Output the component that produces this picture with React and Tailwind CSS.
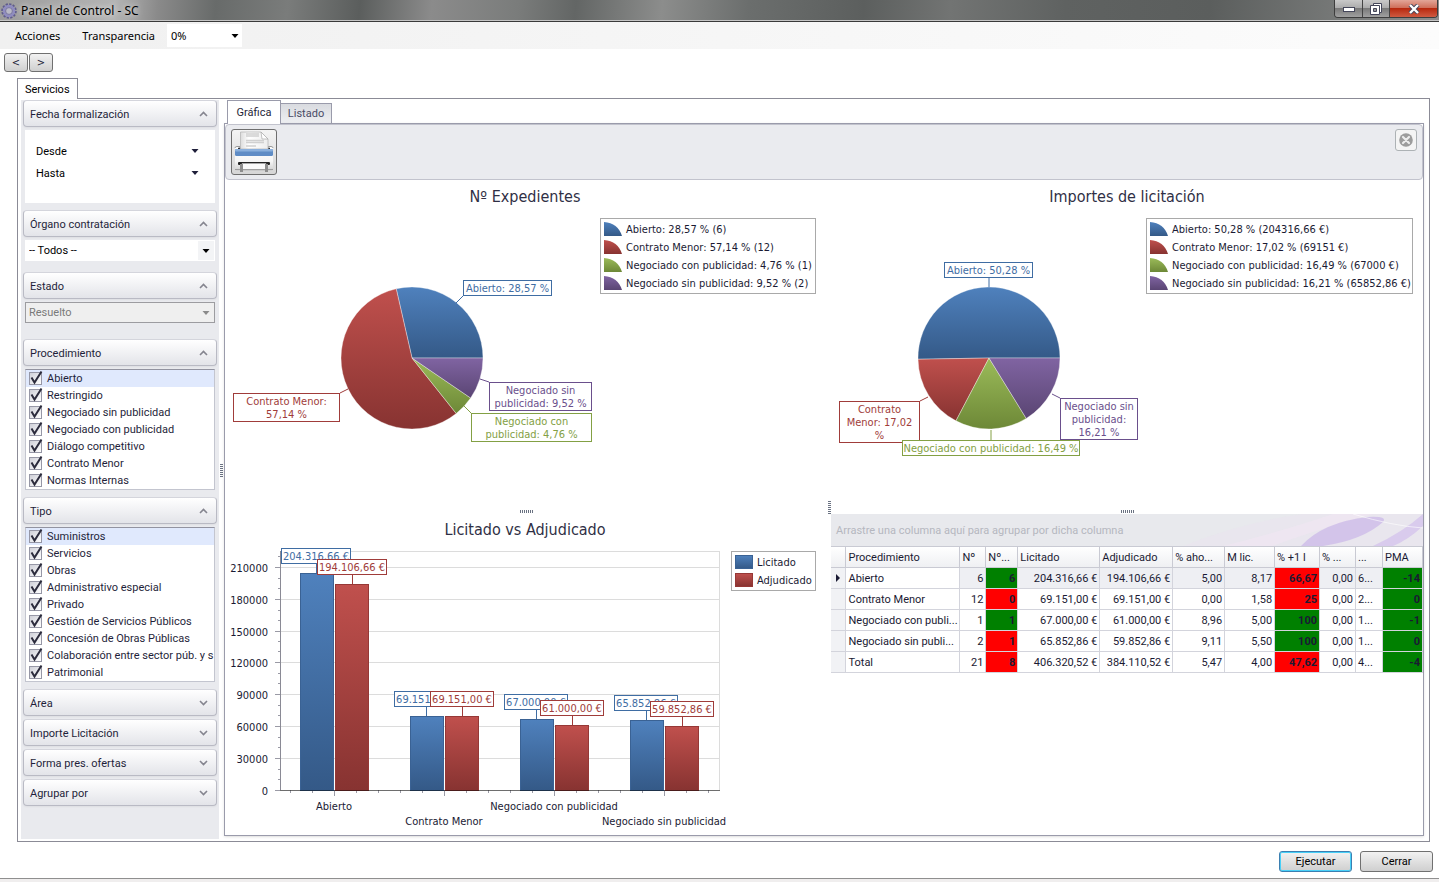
import React, { useState } from "react";

const COLORS = {
  blue: { line: "#3f6da3", fill: "url(#blueFill)" },
  red: { line: "#a03c3a", fill: "url(#redFill)" },
  green: { line: "#83a044", fill: "url(#greenFill)" },
  purple: { line: "#6a4f8c", fill: "url(#purpleFill)" },
};

const procedimientos = [
  "Abierto",
  "Restringido",
  "Negociado sin publicidad",
  "Negociado con publicidad",
  "Diálogo competitivo",
  "Contrato Menor",
  "Normas Internas",
];

const tipos = [
  "Suministros",
  "Servicios",
  "Obras",
  "Administrativo especial",
  "Privado",
  "Gestión de Servicios Públicos",
  "Concesión de Obras Públicas",
  "Colaboración entre sector púb. y s",
  "Patrimonial",
];

const expedientes = {
  title: "Nº Expedientes",
  titleX: 300,
  width: 602,
  cx: 187,
  slices: [
    { color: "blue", value: 28.57 },
    { color: "red", value: 57.14 },
    { color: "green", value: 4.76 },
    { color: "purple", value: 9.52 },
  ],
  labels: [
    { color: "blue", x: 238, y: 100, w: 89, lines: ["Abierto: 28,57 %"], link: [231, 123, 238, 116] },
    { color: "red", x: 8, y: 213, w: 107, lines: ["Contrato Menor:", "57,14 %"], link: [123, 209, 115, 213] },
    { color: "purple", x: 264, y: 202, w: 103, lines: ["Negociado sin", "publicidad: 9,52 %"], link: [255, 199, 264, 202] },
    { color: "green", x: 246, y: 233, w: 121, lines: ["Negociado con", "publicidad: 4,76 %"], link: [239, 226, 246, 233] },
  ],
  legendX: 375,
  legendWidth: 216,
  legend: [
    "Abierto: 28,57 % (6)",
    "Contrato Menor: 57,14 % (12)",
    "Negociado con publicidad: 4,76 % (1)",
    "Negociado sin publicidad: 9,52 % (2)",
  ],
};

const importes = {
  title: "Importes de licitación",
  titleX: 296,
  width: 592,
  cx: 158,
  slices: [
    { color: "blue", value: 50.28 },
    { color: "red", value: 17.02 },
    { color: "green", value: 16.49 },
    { color: "purple", value: 16.21 },
  ],
  labels: [
    { color: "blue", x: 113, y: 82, w: 89, lines: ["Abierto: 50,28 %"], link: [158, 98, 158, 107] },
    { color: "red", x: 8, y: 221, w: 81, lines: ["Contrato", "Menor: 17,02", "%"], link: [97, 217, 89, 221] },
    { color: "purple", x: 229, y: 218, w: 78, lines: ["Negociado sin", "publicidad:", "16,21 %"], link: [221, 214, 229, 218] },
    { color: "green", x: 71, y: 260, w: 178, lines: ["Negociado con publicidad: 16,49 %"], link: [160, 250, 160, 260] },
  ],
  legendX: 315,
  legendWidth: 267,
  legend: [
    "Abierto: 50,28 % (204316,66 €)",
    "Contrato Menor: 17,02 % (69151 €)",
    "Negociado con publicidad: 16,49 % (67000 €)",
    "Negociado sin publicidad: 16,21 % (65852,86 €)",
  ],
};

const bars = [
  { name: "Abierto", lic: 204316.66, adj: 194106.66, licText: "204.316,66 €", adjText: "194.106,66 €" },
  { name: "Contrato Menor", lic: 69151, adj: 69151, licText: "69.151,00 €", adjText: "69.151,00 €" },
  { name: "Negociado con publicidad", lic: 67000, adj: 61000, licText: "67.000,00 €", adjText: "61.000,00 €" },
  { name: "Negociado sin publicidad", lic: 65852.86, adj: 59852.86, licText: "65.852,86 €", adjText: "59.852,86 €" },
];

const columns = [
  { title: "", width: 15 },
  { title: "Procedimiento", width: 114 },
  { title: "Nº", width: 26 },
  { title: "Nº...", width: 32 },
  { title: "Licitado", width: 82 },
  { title: "Adjudicado", width: 73 },
  { title: "% aho...", width: 52 },
  { title: "M lic.", width: 50 },
  { title: "% +1 l", width: 45 },
  { title: "% ...", width: 36 },
  { title: "...", width: 27 },
  { title: "PMA", width: 40 },
];

const rows = [
  ["Abierto", "6", "6", "204.316,66 €", "194.106,66 €", "5,00", "8,17", "66,67", "0,00", "6...", "-14"],
  ["Contrato Menor", "12", "0", "69.151,00 €", "69.151,00 €", "0,00", "1,58", "25", "0,00", "2...", "0"],
  ["Negociado con publi...", "1", "1", "67.000,00 €", "61.000,00 €", "8,96", "5,00", "100", "0,00", "1...", "-1"],
  ["Negociado sin publi...", "2", "1", "65.852,86 €", "59.852,86 €", "9,11", "5,50", "100", "0,00", "1...", "0"],
  ["Total", "21", "8", "406.320,52 €", "384.110,52 €", "5,47", "4,00", "47,62", "0,00", "4...", "-4"],
];

// which of the highlighted cells are green, by row
const greenCells = [[2, 10], [10], [2, 7, 10], [7, 10], [10]];

const GradientDefs = () => (
  <svg width="0" height="0" className="absolute" aria-hidden="true">
    <defs>
      <linearGradient id="blueFill" x1="0" y1="0" x2="0" y2="1">
        <stop offset="0" stopColor="#4f81bd" />
        <stop offset="1" stopColor="#345987" />
      </linearGradient>
      <linearGradient id="redFill" x1="0" y1="0" x2="0" y2="1">
        <stop offset="0" stopColor="#c0504d" />
        <stop offset="1" stopColor="#873331" />
      </linearGradient>
      <linearGradient id="greenFill" x1="0" y1="0" x2="0" y2="1">
        <stop offset="0" stopColor="#9bbb59" />
        <stop offset="1" stopColor="#6d8837" />
      </linearGradient>
      <linearGradient id="purpleFill" x1="0" y1="0" x2="0" y2="1">
        <stop offset="0" stopColor="#8064a2" />
        <stop offset="1" stopColor="#5a4573" />
      </linearGradient>
    </defs>
  </svg>
);

const ChartLabel = ({ color, x, y, w, lines }) => (
  <g>
    <rect
      x={x + 0.5}
      y={y + 0.5}
      width={w - 1}
      height={lines.length * 13 + 2}
      fill="#fff"
      stroke={COLORS[color].line}
    />
    {lines.map((line, i) => (
      <text key={line} x={x + w / 2} y={y + 12 + i * 13} textAnchor="middle" fill={COLORS[color].line}>
        {line}
      </text>
    ))}
  </g>
);

const PieChart = ({ chart }) => {
  const { cx } = chart;
  const cy = 178;
  const r = 71;
  let angle = 0;

  const slices = chart.slices.map((slice) => {
    const start = angle;
    angle += (slice.value / 100) * Math.PI * 2;
    const large = angle - start > Math.PI ? 1 : 0;
    const d = `M${cx} ${cy} L${cx + r * Math.cos(start)} ${cy - r * Math.sin(start)} A${r} ${r} 0 ${large} 0 ${
      cx + r * Math.cos(angle)
    } ${cy - r * Math.sin(angle)} Z`;
    return { ...slice, d };
  });

  return (
    <svg viewBox={`0 0 ${chart.width} 328`} className="block w-full" role="img" aria-label={chart.title}>
      <text x={chart.titleX} y="22" textAnchor="middle" fill="#2f2f45" className="text-[16px]">
        {chart.title}
      </text>
      {slices.map((s) => (
        <path key={s.color} d={s.d} fill={COLORS[s.color].fill} stroke="#fff" strokeOpacity="0.35" />
      ))}
      {chart.labels.map(({ link, color }) => (
        <line key={color} x1={link[0]} y1={link[1]} x2={link[2]} y2={link[3]} stroke={COLORS[color].line} />
      ))}
      {chart.labels.map((label) => (
        <ChartLabel key={label.color} {...label} />
      ))}

      <rect x={chart.legendX + 0.5} y="38.5" width={chart.legendWidth - 1} height="75" fill="#fff" stroke="#a9a9a9" />
      {chart.legend.map((text, i) => (
        <g key={text}>
          <path
            d={`M${chart.legendX + 4} ${42 + i * 18} q14 1 18 14 h-18 z`}
            fill={COLORS[chart.slices[i].color].fill}
          />
          <text x={chart.legendX + 26} y={53 + i * 18} fill="#1a1a33">
            {text}
          </text>
        </g>
      ))}
    </svg>
  );
};

const BarChart = () => {
  const left = 55;
  const right = 495;
  const base = 276;
  const unit = 31.9 / 30000;
  const ticks = [0, 30000, 60000, 90000, 120000, 150000, 180000, 210000];

  return (
    <svg viewBox="0 0 602 320" className="block w-full" role="img" aria-label="Licitado vs Adjudicado">
      <text x="300" y="21" textAnchor="middle" fill="#2f2f45" className="text-[16px]">
        Licitado vs Adjudicado
      </text>
      <rect x={left + 0.5} y="37.5" width={right - left - 1} height={base - 37} fill="none" stroke="#dcdcdc" />
      {ticks.map((t) => {
        const y = Math.round(base - t * unit) + 0.5;
        return (
          <g key={t}>
            <line x1={left} x2={right} y1={y} y2={y} stroke="#dcdcdc" />
            <line x1={left - 5} x2={left} y1={y} y2={y} stroke="#9a9aa5" />
            {t < 210000 && (
              <>
                <line x1={left - 2} x2={left} y1={y - 11} y2={y - 11} stroke="#9a9aa5" />
                <line x1={left - 2} x2={left} y1={y - 21} y2={y - 21} stroke="#9a9aa5" />
              </>
            )}
            <text x={left - 12} y={y + 4} textAnchor="end" fill="#1a1a33">
              {t}
            </text>
          </g>
        );
      })}
      <line x1={left - 2} x2={left} y1="42.5" y2="42.5" stroke="#9a9aa5" />
      <line x1={left + 0.5} x2={left + 0.5} y1="37" y2={base} stroke="#8a8a95" />
      {Array.from({ length: 20 }, (_, i) => (
        <line
          key={i}
          x1={left + 10.5 + i * 22}
          x2={left + 10.5 + i * 22}
          y1={base}
          y2={base + (i % 5 === 2 ? 6 : 3)}
          stroke="#9a9aa5"
        />
      ))}

      {bars.map((b, i) => {
        const x = 75 + i * 110;
        const hl = Math.round(b.lic * unit);
        const ha = Math.round(b.adj * unit);
        return (
          <g key={b.name}>
            <rect x={x + 0.5} y={base - hl + 0.5} width="33" height={hl} fill={COLORS.blue.fill} stroke="#3a6294" />
            <rect x={x + 35.5} y={base - ha + 0.5} width="33" height={ha} fill={COLORS.red.fill} stroke="#963836" />
            <text x={x + 34} y={i % 2 ? 311 : 296} textAnchor="middle" fill="#1a1a33">
              {b.name}
            </text>
          </g>
        );
      })}
      <line x1={left} x2={right} y1={base + 0.5} y2={base + 0.5} stroke="#000" strokeOpacity="0.5" />

      {bars.map((b, i) => {
        const x = 75 + i * 110;
        const yl = base - Math.round(b.lic * unit);
        const ya = base - Math.round(b.adj * unit);
        const w = i === 0 ? 70 : 64;
        return (
          <g key={b.name}>
            <line x1={x + 16.5} x2={x + 16.5} y1={yl - 10} y2={yl} stroke={COLORS.blue.line} />
            <ChartLabel color="blue" x={x + 16 - w / 2} y={yl - 25} w={w} lines={[b.licText]} />
            <line x1={x + 52.5} x2={x + 52.5} y1={ya - 10} y2={ya} stroke={COLORS.red.line} />
            <ChartLabel color="red" x={x + 52 - w / 2} y={ya - 25} w={w} lines={[b.adjText]} />
          </g>
        );
      })}

      <rect x="506.5" y="37.5" width="84" height="39" fill="#fff" stroke="#a9a9a9" />
      <rect x="510.5" y="41.5" width="17" height="13" fill={COLORS.blue.fill} stroke="#3a6294" />
      <rect x="510.5" y="59.5" width="17" height="13" fill={COLORS.red.fill} stroke="#963836" />
      <text x="532" y="52" fill="#1a1a33">Licitado</text>
      <text x="532" y="70" fill="#1a1a33">Adjudicado</text>
    </svg>
  );
};

const GearIcon = () => (
  <svg viewBox="0 0 16 16" className="size-4">
    <circle cx="8" cy="8" r="6.6" fill="none" stroke="#5f5b8c" strokeWidth="2.4" strokeDasharray="2.2 1.25" />
    <circle cx="8" cy="8" r="4.900" fill="none" stroke="#8f8cc0" strokeWidth="2.600" />
    <circle cx="8" cy="8" r="3.400" fill="#b9b9c6" stroke="#6d699c" strokeWidth="0.8" />
  </svg>
);

const PrinterIcon = () => (
  <svg viewBox="0 0 44 44" className="size-11">
    <defs>
      <linearGradient id="paper" x1="0" y1="0" x2="1" y2="0">
        <stop offset="0" stopColor="#dcdcdc" />
        <stop offset="0.3" stopColor="#fff" />
        <stop offset="1" stopColor="#ededed" />
      </linearGradient>
      <linearGradient id="body" x1="0" y1="0" x2="0" y2="1">
        <stop offset="0" stopColor="#fdfdfd" />
        <stop offset="0.6" stopColor="#f6f6f6" />
        <stop offset="1" stopColor="#cfcfcf" />
      </linearGradient>
    </defs>
    <path d="M3 19 Q3 16 5 16 H38 Q41 16 41 19 V39 Q41 41 38 41 H5 Q3 41 3 39 Z" fill="url(#body)" />
    <path d="M3 18 Q3 16.500 5 16.500 H8 V19 M36 19 V16.500 H39 Q41 16.500 41 18" fill="none" stroke="#9a9a9a" />
    <path d="M6 18.500 H38" stroke="#333" strokeWidth="1.500" />
    <path d="M8.500 2 H29 L36 9 V19 H8.500 Z" fill="url(#paper)" stroke="#b8b8b8" strokeWidth="0.8" />
    <path d="M29 2 L36 9 H30 Z" fill="#fff" stroke="#aaa" strokeWidth="0.7" />
    <path d="M14 4 H27 M14 6 H27 M14 10.500 H32 M14 12.500 H32 M14 16 H24" stroke="#d0d0d0" strokeWidth="1.500" />
    <rect x="3" y="19" width="38" height="7" rx="1.500" fill="#5f8cc5" />
    <rect x="3" y="19" width="38" height="2.500" rx="1" fill="#8aafdc" />
    <rect x="6" y="32" width="32" height="3" rx="1" fill="#222" />
    <path d="M10 33.500 H34 V40 H10 Z" fill="#fafafa" stroke="#bbb" strokeWidth="0.6" />
    <path d="M3 39.500 H41" stroke="#9f9f9f" />
    <rect x="8" y="34" width="3" height="8" fill="#8d8d8d" />
    <rect x="33" y="34" width="3" height="8" fill="#8d8d8d" />
  </svg>
);

const Arrow = ({ className }) => (
  <svg viewBox="0 0 8 4" className={`pointer-events-none h-1 w-2 ${className}`}>
    <path d="M0.500 0 H7.500 L4 4 Z" fill="currentColor" />
  </svg>
);

const Grip = ({ vertical = false }) => (
  <div className={`flex gap-px ${vertical ? "flex-col" : ""}`}>
    {Array.from({ length: 7 }, (_, i) => (
      <span key={i} className={vertical ? "h-px w-[3px] bg-gray-500" : "h-[3px] w-px bg-gray-500"}></span>
    ))}
  </div>
);

const GroupHeader = ({ title, open = false, onClick }) => (
  <button
    onClick={onClick}
    aria-expanded={open}
    className="flex h-[27px] w-full items-center justify-between rounded-sm border border-[#b9bac4] border-t-[#d4d5dc] bg-linear-to-b from-white to-[#e3e4e9] pt-px pr-2 pl-1.5 shadow-xs"
  >
    <span>{title}</span>
    <svg viewBox="0 0 9 6" className="h-1.5 w-[9px]">
      <path
        d={open ? "M1 5 L4.500 1.500 L8 5" : "M1 1 L4.500 4.500 L8 1"}
        fill="none"
        stroke="#85858f"
        strokeWidth="1.600"
      />
    </svg>
  </button>
);

const CheckList = ({ items }) => (
  <div className="mx-0.5 mt-[3px] overflow-hidden border border-[#c3c5cf] border-t-[#9293a0] bg-white">
    {items.map((item, i) => (
      <label
        key={item}
        className={`flex h-[17px] items-center gap-1 pl-[3px] whitespace-nowrap ${i === 0 ? "bg-[#e0e9fd]" : ""}`}
      >
        <span className="relative size-3.5 shrink-0">
          <input
            type="checkbox"
            defaultChecked
            className="peer block size-[13px] appearance-none border border-[#9697a6] bg-linear-to-br from-[#cfd0d8] to-white"
          />
          <svg
            viewBox="0 0 14 14"
            className="pointer-events-none absolute inset-0 hidden size-3.5 overflow-visible peer-checked:block"
          >
            <path d="M2.500 5.500 L5.500 10.500 L12.500 -0.500" fill="none" stroke="#2b2b3c" strokeWidth="2" />
          </svg>
        </span>
        {item}
      </label>
    ))}
  </div>
);

const DateField = ({ label }) => (
  <label className="relative flex h-[22px] items-center">
    <span className="w-16 pl-[11px] text-black">{label}</span>
    <select className="flex-1 appearance-none bg-white" defaultValue="">
      <option value=""></option>
    </select>
    <Arrow className="absolute right-4 text-[#1f1f3a]" />
  </label>
);

const Sidebar = () => {
  const [open, setOpen] = useState({ fecha: true, organo: true, estado: true, procedimiento: true, tipo: true });
  const toggle = (key) => setOpen({ ...open, [key]: !open[key] });

  return (
    <aside className="flex w-[198px] shrink-0 flex-col bg-[#e9eaee] px-0.5 font-[Roboto,sans-serif]">
      <div className="mb-[7px]">
        <GroupHeader title="Fecha formalización" open={open.fecha} onClick={() => toggle("fecha")} />
        {open.fecha && (
          <div className="mx-0.5 mt-[3px] h-[73px] bg-white pt-2.5">
            <DateField label="Desde" />
            <DateField label="Hasta" />
          </div>
        )}
      </div>

      <div className="mb-[11px]">
        <GroupHeader title="Órgano contratación" open={open.organo} onClick={() => toggle("organo")} />
        {open.organo && (
          <div className="relative mx-0.5 mt-[3px] flex h-[21px] items-center bg-white">
            <select aria-label="Órgano contratación" className="h-full w-full appearance-none pl-1 text-black">
              <option>-- Todos --</option>
            </select>
            <span className="pointer-events-none absolute inset-y-px right-px flex w-4 items-center justify-center bg-gray-100">
              <Arrow className="text-black" />
            </span>
          </div>
        )}
      </div>

      <div className="mb-4">
        <GroupHeader title="Estado" open={open.estado} onClick={() => toggle("estado")} />
        {open.estado && (
          <div className="relative mx-0.5 mt-[3px] flex h-[21px] items-center border border-[#9c9ca0] bg-[#efefef]">
            <select
              aria-label="Estado"
              disabled
              className="h-full w-full appearance-none pl-[3px] text-[#7a7a7a] opacity-100"
            >
              <option>Resuelto</option>
            </select>
            <Arrow className="absolute right-1 text-[#8a8a8a]" />
          </div>
        )}
      </div>

      <div className="mb-[7px]">
        <GroupHeader title="Procedimiento" open={open.procedimiento} onClick={() => toggle("procedimiento")} />
        {open.procedimiento && <CheckList items={procedimientos} />}
      </div>

      <div className="mb-[7px]">
        <GroupHeader title="Tipo" open={open.tipo} onClick={() => toggle("tipo")} />
        {open.tipo && <CheckList items={tipos} />}
      </div>

      <div className="flex flex-col gap-[3px]">
        <GroupHeader title="Área" />
        <GroupHeader title="Importe Licitación" />
        <GroupHeader title="Forma pres. ofertas" />
        <GroupHeader title="Agrupar por" />
      </div>
    </aside>
  );
};

const ResultTable = () => (
  <div className="font-[Roboto,sans-serif]">
    <div className="relative flex h-8 items-center overflow-hidden bg-[#e8e9ed] px-[5px] text-[#b5b7bf]">
      <svg viewBox="0 0 240 32" className="absolute top-0 right-0 h-8 w-60">
        <path d="M0 32 Q60 8 120 0 H240 V32 Z" fill="#e9e4ef" opacity="0.6" />
        <path d="M40 32 Q90 20 150 0 H190 Q120 20 90 32 Z" fill="#efe6f1" opacity="0.8" />
        <path d="M118 32 Q140 8 185 3 Q205 2 200 8 Q180 26 140 32 Z" fill="#cdbbe8" opacity="0.8" />
        <path d="M190 32 Q220 18 240 0 V12 Q225 26 210 32 Z" fill="#d5c4ec" opacity="0.8" />
        <path d="M170 0 Q210 12 240 14" fill="none" stroke="#fff" opacity="0.6" />
      </svg>
      <span className="relative">Arrastre una columna aquí para agrupar por dicha columna</span>
    </div>
    <table className="w-full table-fixed border-collapse text-[#1a1a33]">
      <colgroup>
        {columns.map((c) => (
          <col key={c.title} style={{ width: `${(c.width / 592) * 100}%` }} />
        ))}
      </colgroup>
      <thead>
        <tr className="h-[21px] bg-linear-to-b from-white to-[#eeeff2]">
          {columns.map((c) => (
            <th
              key={c.title}
              scope="col"
              className="overflow-hidden border border-[#c9cad3] px-0.5 text-left font-normal whitespace-nowrap first:border-l-0"
            >
              {c.title}
            </th>
          ))}
        </tr>
      </thead>
      <tbody>
        {rows.map((row, r) => (
          <tr key={row[0]} className={`h-[21px] ${r === 0 ? "bg-[#eeeff3]" : "bg-white"}`}>
            <td className="border border-l-0 border-[#d3d4dc] bg-[#f1f2f5] p-0">
              {r === 0 && (
                <svg viewBox="0 0 4 8" className="mx-auto h-2 w-1">
                  <path d="M0 0 L4 4 L0 8 Z" fill="#1a1a33" />
                </svg>
              )}
            </td>
            {row.map((cell, c) => {
              const marked = c === 2 || c === 7 || c === 10;
              const color = greenCells[r].includes(c) ? "bg-[#008000]" : "bg-[#ff0000]";
              return (
                <td
                  key={c}
                  className={`overflow-hidden border border-[#d3d4dc] px-0.5 py-0 whitespace-nowrap ${
                    c === 0 ? "bg-white text-left" : c === 9 ? "text-left" : "text-right"
                  } ${marked ? `font-bold ${color}` : ""}`}
                >
                  {cell}
                </td>
              );
            })}
          </tr>
        ))}
      </tbody>
    </table>
  </div>
);

const App = () => {
  const [view, setView] = useState("grafica");

  return (
    <div className="flex min-h-screen flex-col bg-white font-['DejaVu_Sans_Condensed','DejaVu_Sans',sans-serif] text-[11px] leading-[13px] text-[#1f1f3a]">
      <GradientDefs />

      {/* Title bar */}
      <header className="flex h-[22px] items-start justify-between border-b border-[#3a3a3a] bg-[linear-gradient(95deg,#9c9c9c_0%,#b4b4b4_8%,#8a8a8a_11%,#686b6a_15%,#7a7c7b_20%,#5b5e5d_25%,#8b8b8b_30%,#7a7c7b_36%,#636665_40%,#8c8d8c_46%,#6b6e6d_52%,#5c5f5e_60%,#727473_66%,#5f6261_74%,#5b5e5d_84%,#7d7f7e_95%,#8d8d8d_100%)] font-['Noto_Sans',sans-serif] text-[12px] text-black shadow-[inset_0_-1px_0_#c5c5c5]">
        <div className="flex h-[21px] items-center gap-1 pl-px">
          <GearIcon />
          <span className="text-shadow-[0_0_6px_#ffffff]">Panel de Control - SC</span>
        </div>
        <div className="mr-px flex h-[18px] overflow-hidden rounded-b border border-t-0 border-[#3d3d3d]">
          <button
            aria-label="Minimizar"
            className="flex w-7 items-end justify-center border-r border-[#444] bg-[linear-gradient(#c9c9c9,#a9a9a9_50%,#7a7a7a_50%,#a0a0a0)] pb-[5px]"
          >
            <svg viewBox="0 0 12 5" className="h-[5px] w-3">
              <rect x="0.500" y="0.500" width="11" height="4" fill="#fff" stroke="#44465a" />
            </svg>
          </button>
          <button
            aria-label="Restaurar"
            className="flex w-[27px] items-center justify-center border-r border-[#444] bg-[linear-gradient(#c9c9c9,#a9a9a9_50%,#7a7a7a_50%,#a0a0a0)]"
          >
            <svg viewBox="0 0 12 12" className="size-3">
              <path d="M3.500 0.500 H11.500 V9.500 H3.500 Z" fill="#fff" stroke="#44465a" />
              <path d="M0.500 2.500 H9.500 V11.500 H0.500 Z" fill="#fff" stroke="#44465a" />
              <path d="M3.500 5.500 H6.500 V8.500 H3.500 Z" fill="#999" stroke="#44465a" />
            </svg>
          </button>
          <button
            aria-label="Cerrar ventana"
            className="flex w-[47px] items-center justify-center bg-[linear-gradient(#e3a698,#cd6a55_50%,#b8290f_50%,#cf5a41)]"
          >
            <svg viewBox="0 0 12 10" className="h-2.5 w-3">
              <path d="M2 1 L10 9 M10 1 L2 9" stroke="#44465a" strokeWidth="4.200" />
              <path d="M2 1 L10 9 M10 1 L2 9" stroke="#fff" strokeWidth="2.400" />
            </svg>
          </button>
        </div>
      </header>

      {/* Menu */}
      <nav className="flex h-[27px] items-center bg-linear-to-r from-[#f0f0f0] to-[#fcfcfc] pl-[15px] font-['Noto_Sans',sans-serif] text-black">
        <button className="mr-[22px]">Acciones</button>
        <button className="mr-3">Transparencia</button>
        <div className="relative flex h-[23px] w-[75px] items-center bg-white">
          <select aria-label="Transparencia" className="h-full w-full appearance-none pl-1">
            <option>0%</option>
            <option>25%</option>
            <option>50%</option>
          </select>
          <Arrow className="absolute right-[3px]" />
        </div>
      </nav>

      <div className="flex gap-px px-1 pt-1">
        <button className="h-[19px] w-6 rounded-[3px] border border-[#707070] bg-linear-to-b from-[#f2f2f2] to-[#cfcfcf] leading-none">
          &lt;
        </button>
        <button className="h-[19px] w-6 rounded-[3px] border border-[#707070] bg-linear-to-b from-[#f2f2f2] to-[#cfcfcf] leading-none">
          &gt;
        </button>
      </div>

      <div className="mt-1.5 flex flex-1 flex-col pr-[9px] pl-[17px]">
        <div role="tablist" className="flex font-[Roboto,sans-serif]">
          <button
            role="tab"
            aria-selected="true"
            className="relative z-10 -mb-px h-[21px] border border-b-0 border-[#8b8b96] bg-white px-[7px] text-black"
          >
            Servicios
          </button>
        </div>

        <div className="flex flex-1 border border-[#8b8b96] p-px pr-[5px]">
          <div className="flex pb-px pl-0.5">
            <Sidebar />
          </div>
          <div className="flex w-[5px] items-center justify-center">
            <Grip vertical />
          </div>

          <main className="flex min-w-0 flex-1 flex-col pb-1">
            <div role="tablist" className="flex items-end pl-[3px] font-[Roboto,sans-serif]">
              <button
                role="tab"
                aria-selected={view === "grafica"}
                onClick={() => setView("grafica")}
                className="relative z-10 -mb-px h-6 w-[54px] border border-b-0 border-[#9a9bab] bg-white text-[#1f1f3a]"
              >
                Gráfica
              </button>
              <button
                role="tab"
                aria-selected={view === "listado"}
                onClick={() => setView("listado")}
                className="h-5 w-[51px] border border-b-0 border-l-0 border-[#9a9bab] bg-linear-to-b from-[#d9dbe0] to-[#eeeff2] text-[#4a4b66]"
              >
                Listado
              </button>
            </div>

            <section className="flex flex-1 flex-col border border-[#9a9bab] shadow-sm">
              <div className="flex h-14 items-start justify-between rounded-sm border border-[#c2c3cd] bg-[#eaebef] px-[5px] pt-1">
                <button
                  aria-label="Imprimir"
                  className="flex size-[46px] items-center justify-center overflow-hidden rounded-[3px] border border-[#6e6e6e] bg-linear-to-b from-[#f4f4f4] to-[#d6d6d6]"
                >
                  <PrinterIcon />
                </button>
                <button
                  aria-label="Cerrar gráfica"
                  className="flex size-[22px] items-center justify-center rounded-[3px] border border-[#adb2b5] bg-[#f4f4f4]"
                >
                  <svg viewBox="0 0 14 14" className="size-3.5">
                    <circle cx="7" cy="7" r="6.800" fill="#9c9c9c" />
                    <path d="M4 4 L10 10 M10 4 L4 10" stroke="#ececec" strokeWidth="2.200" strokeLinecap="round" />
                  </svg>
                </button>
              </div>

              <div className="flex flex-1">
                <div className="min-w-0 flex-[602]">
                  <PieChart chart={expedientes} />
                  <div className="flex h-1.5 items-center justify-center">
                    <Grip />
                  </div>
                  <BarChart />
                </div>
                <div className="flex w-1 items-center justify-center">
                  <Grip vertical />
                </div>
                <div className="min-w-0 flex-[592]">
                  <PieChart chart={importes} />
                  <div className="flex h-1.5 items-center justify-center">
                    <Grip />
                  </div>
                  <ResultTable />
                </div>
              </div>
            </section>
          </main>
        </div>
      </div>

      <footer className="mt-[9px] font-[Roboto,sans-serif]">
        <div className="flex justify-end gap-2 pr-1.5 pb-1.5">
          <button className="h-[21px] w-[73px] rounded-[3px] border border-[#3c7fb1] bg-linear-to-b from-[#f2f2f2] to-[#cfcfcf] text-black shadow-[inset_0_0_0_1px_#48d0f8]">
            Ejecutar
          </button>
          <button className="h-[21px] w-[73px] rounded-[3px] border border-[#707070] bg-linear-to-b from-[#f2f2f2] to-[#cfcfcf] text-black">
            Cerrar
          </button>
        </div>
        <div className="h-1 border-t border-[#8f8f8f] bg-[#f0eeee]"></div>
      </footer>
    </div>
  );
};

export default App;
